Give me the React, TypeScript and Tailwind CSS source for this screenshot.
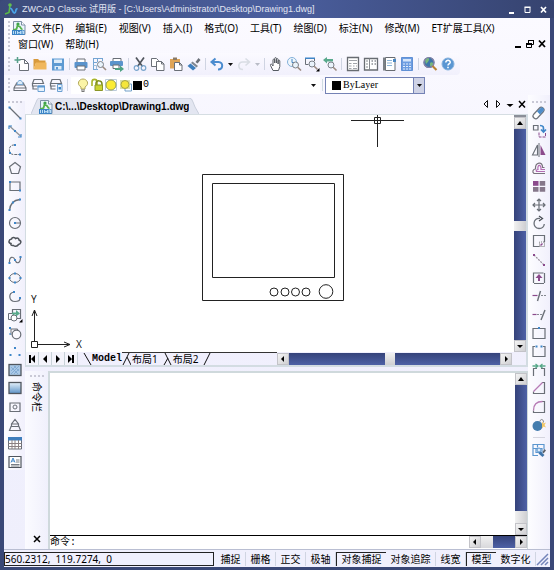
import React from 'react';

const G = '#6a6f77';
const B = '#3f86c8';
const P = '#8b4a8c';

type IconDef = { label: string; art: React.ReactNode };

const Icon: React.FC<{ children: React.ReactNode }> = ({ children }) => (
  <svg viewBox="0 0 16 16" className="block size-4 shrink-0" fill="none" aria-hidden="true">
    {children}
  </svg>
);

const ToolButton: React.FC<{ icon: IconDef }> = ({ icon }) => (
  <button type="button" title={icon.label} aria-label={icon.label} className="size-4 shrink-0 hover:bg-blue-100">
    <Icon>{icon.art}</Icon>
  </button>
);

const Dot: React.FC<{ x: number; y: number; c?: string }> = ({ x, y, c = B }) => (
  <rect x={x - 1} y={y - 1} width="2" height="2" fill={c} />
);

const Magnifier: React.FC<{ x: number; y: number }> = ({ x, y }) => (
  <>
    <circle cx={x} cy={y} r="3" fill="#eaf3fb" stroke="#7a7f87" />
    <path d={`M${x + 2.2} ${y + 2.2}l3.3 3.3`} stroke="#9a8a80" strokeWidth="1.6" />
  </>
);

const standardTools: IconDef[][] = [
  [
    { label: '新建', art: <><path d="M5.5 3.5h5l4 4v7h-9V8" fill="#fff" stroke={G} /><path d="M10.5 3.5v4h4" stroke={G} /><path d="M3.5 1v6M.5 4h6" stroke="#57a08a" strokeWidth="1.5" /></> },
    { label: '打开', art: <><path d="M1.5 13.5V3H6l1.500 1.500h6V7H4z" fill="#d89a3c" /><path d="M1.500 13.500L4 6.500h10.500v7z" fill="#f0b75c" /></> },
    { label: '保存', art: <><path d="M2 2.500h12v12H2z" fill="#5d9ad2" /><path d="M4 3.500h8V7H4zM4.500 10h7v3.500h-7z" fill="#dcecf9" /><path d="M6 11h2v2.500H6z" fill="#5d9ad2" /></> },
  ],
  [
    { label: '打印', art: <><path d="M4 3h8v4H4z" fill="#fff" stroke={G} /><rect x="1.500" y="6" width="13" height="6" rx="1" fill="#5a93cc" /><path d="M4 10h8v4H4z" fill="#fff" stroke={G} /></> },
    { label: '打印预览', art: <><path d="M2 2.500h10M2 13.500h5M2.500 2v12M6.500 2v4M2 6.500h4M11.500 2v3" stroke="#74a5d3" /><path d="M2.500 9.500h3M5.500 9.500v4" stroke="#9bbbd9" /><Magnifier x={9.500} y={8.500} /></> },
    { label: '发布', art: <><path d="M4 2.500h8v3H4z" fill="#fff" stroke={G} /><rect x="1" y="5" width="13" height="5" rx="1" fill="#5a93cc" /><path d="M4 9h6v3.500H4z" fill="#fff" stroke={G} /><path d="M6 12h5V9.500l4 3.500-4 3V14H6z" fill="#4ea183" /></> },
  ],
  [
    { label: '剪切', art: <><path d="M4 1.500l6.500 9M12 1.500l-6.500 9" stroke="#50555c" strokeWidth="1.700" /><circle cx="4.500" cy="12" r="2.300" stroke="#7aa5cc" strokeWidth="1.200" /><circle cx="11.500" cy="12" r="2.300" stroke="#7aa5cc" strokeWidth="1.200" /></> },
    { label: '复制', art: <><path d="M1.500 2.500h5l2 2v6h-7z" fill="#fff" stroke={G} /><path d="M6.500 5.500h5l2.500 2.500v6.500H6.500z" fill="#fff" stroke={G} /><path d="M11.500 5.500V8H14" stroke={G} /></> },
    { label: '粘贴', art: <><path d="M2 3h10v9.500H2z" fill="#e0a556" /><path d="M5 1.500h4V4H5z" fill="#8a7a65" /><path d="M6.500 6.500h5l2.500 2.500v5.500H6.500z" fill="#fff" stroke={G} /><path d="M11.500 6.500V9H14" stroke={G} /></> },
    { label: '特性匹配', art: <><path d="M9.500 6L12.500 2 14.500 4 11.500 7.500z" fill="#6b7078" /><path d="M6.500 5.500l5.500 4.500-1.500 1.500-5.500-4.500z" fill="#7f8791" /><path d="M4.500 7.500l5.500 4.500-3 2.500-5.500-4.500z" fill="#3f7fbd" /></> },
  ],
];

const undoIcon: IconDef = { label: '放弃', art: <path d="M6.500 2.500L2.500 6l4 3.500M3 6h6.500c5 0 5 7.500-.5 7.500" stroke="#4b8ccf" strokeWidth="2" /> };
const redoIcon: IconDef = { label: '重做', art: <path d="M9.500 2.500l4 3.500-4 3.500M13 6H6.500c-5 0-5 7.500.5 7.500" stroke="#d9dde4" strokeWidth="1.600" /> };

const viewTools: IconDef[][] = [
  [
    { label: '实时平移', art: <path d="M5 14.500L2.500 9.500c-.5-1.500 1-2 1.800-.5l.7 1V4c0-1.200 1.700-1.200 1.700 0v3-4.500c0-1.200 1.700-1.200 1.700 0V7 3.500c0-1.200 1.700-1.200 1.700 0V8 5c0-1.200 1.700-1.200 1.700 0v5.500l-1.300 4z" fill="#fff" stroke="#555a61" /> },
    { label: '实时缩放', art: <><circle cx="6" cy="6" r="4.500" fill="#eff6fc" stroke="#84b1da" /><path d="M6 3v3.500h2.500" stroke={B} /><Magnifier x={9.500} y={9} /></> },
    { label: '窗口缩放', art: <><path d="M1 1.500h10v1.500H1z" fill={B} /><path d="M1.500 3v5.500h3M10.500 3v2" stroke={G} /><Magnifier x={8} y={8} /><path d="M15.500 12v3.500H12z" fill="#000" /></> },
    { label: '缩放上一个', art: <><path d="M1 4l4-3v2h6v2.500H5V7.500z" fill="#59a98c" /><Magnifier x={9} y={9} /></> },
  ],
  [
    { label: '特性', art: <><path d="M2.500 1.500h11v13h-11z" fill="#fff" stroke="#686c72" strokeWidth="1.300" /><path d="M4 4.500h8M4 7.500h2.500M8 7.500h4M4 10h2.500M8 10h1.500M11 10h1M4 12.500h2.500M8 12.500h4" stroke="#a1a4a9" /></> },
    { label: '设计中心', art: <><path d="M1.500 2.500h13v11.500h-13z" fill="#fff" stroke="#686c72" strokeWidth="1.300" /><path d="M6.500 2.500V14M3 5h2M3 8h2M3 11h2" stroke="#85898f" /><path d="M8.500 5h1.500M11.500 5H13M8.500 8h1.500M11.500 8H13" stroke="#8a8e95" strokeWidth="1.500" /></> },
    { label: '工具选项板', art: <><path d="M4.500 1.500H14v13H4.500z" fill="#fff" stroke="#686c72" /><path d="M2 1.500h2.500v13H2z" fill="#7b8087" /><path d="M6 4.500h5M6 7h5M6 9.500h5" stroke="#8db4d8" /><path d="M12 3h3v3h-3z" fill="#4a86c1" /></> },
    { label: '计算器', art: <><path d="M2.500 1.500h11v13h-11z" fill="#6d9de1" stroke="#6090d5" /><path d="M4 3h8v2.500H4z" fill="#d7e6fa" /><path d="M4 8h8M4 10.500h8M4 13h8" stroke="#e4eefb" strokeWidth="1.200" strokeDasharray="2 1" /></> },
  ],
  [
    { label: '查找', art: <><circle cx="7" cy="6.500" r="5.500" fill="#3d75a8" /><path d="M3 4c2-3 5-2 4 0s-1 2-3 4zM8 7c2-2 4 0 3 2s-3 2-3 0z" fill="#76b67d" /><circle cx="7" cy="6.500" r="5" stroke="#8b82a5" strokeWidth="1.200" /><path d="M10.500 10l4 4" stroke="#b98234" strokeWidth="2.200" /></> },
    { label: '帮助', art: <><circle cx="8" cy="8" r="6" fill="#5a96d2" stroke="#85b1dd" /><path d="M5.800 6.500c0-3 4.600-2.800 4.400-.1C10 8 8 8 8 9.500" stroke="#fff" strokeWidth="1.500" /><path d="M7.200 10.800h1.600v1.500H7.200z" fill="#fff" /></> },
  ],
];

const layerTools: IconDef[] = [
  { label: '图层特性管理器', art: <><path d="M2 13.500h12v-2.500H2zM2 11l1.500-3h9L14 11M4 8l.5-2h7l.5 2" stroke={G} strokeWidth="1.100" /><path d="M5 7.500C5.500 2 10.500 2 11 7.500z" fill="#dcebf8" stroke="#7ba9d4" /></> },
  { label: '图层状态', art: <><path d="M4 2.500h8l1.500 4h-11zM2.500 6.500v2.500h5M3 9v3h4.500" stroke={G} strokeWidth="1.200" /><path d="M8 9h6.500v5.500H8z" fill="#e8f2fb" stroke="#6ca0d2" /><path d="M7.500 8.500h7.500v2H7.500z" fill="#5f98cf" /></> },
  { label: '上一个图层', art: <><path d="M4 2.500h8l1.500 4h-11zM2.500 6.500v2.500h5M3 9v3h4.500" stroke={G} strokeWidth="1.200" /><path d="M9.500 7.500h4.500v7H9.500z" fill="#e8f2fb" stroke="#6ca0d2" /><path d="M10.500 10h2.500v2.500h-2.500z" fill={B} /></> },
];

const drawTools: IconDef[] = [
  { label: '直线', art: <><path d="M2.500 2.500l11 11" stroke={G} strokeWidth="1.300" /><Dot x={2.500} y={2.500} /><Dot x={13.500} y={13.500} /></> },
  { label: '构造线', art: <><path d="M2.500 3l11 10" stroke="#8a9097" strokeWidth="1.200" /><path d="M5 3H2v3M11 14h3v-3" stroke={B} strokeWidth="1.200" /><Dot x={8} y={8} /></> },
  { label: '多段线', art: <><path d="M8 3H6.500C1 3 1 12.500 6.500 12.500h7" stroke={G} strokeDasharray="3 1" /><Dot x={8} y={3} /><Dot x={3} y={11} /><Dot x={13} y={12.500} /></> },
  { label: '正多边形', art: <path d="M8 2.500l5.500 4.200-2 6.800h-7l-2-6.800z" stroke={G} strokeWidth="1.200" /> },
  { label: '矩形', art: <><path d="M3 4h10v8.500H3z" stroke={G} strokeWidth="1.200" /><Dot x={3} y={4} /><Dot x={13} y={12.500} /></> },
  { label: '圆弧', art: <><path d="M2.500 13.500C3 7 7 3 13 2.500" stroke={G} strokeWidth="1.300" /><Dot x={2.500} y={13} /><Dot x={6} y={5.500} /><Dot x={13} y={2.500} /></> },
  { label: '圆', art: <><circle cx="8" cy="8" r="5.500" stroke={G} strokeWidth="1.200" /><path d="M8 8h5.500" stroke={G} /><Dot x={8} y={8} /></> },
  { label: '修订云线', art: <path d="M4.500 5C5 3 8 3 8.500 4.500 11 3 12 5 12 6c3 1 2 4-.5 4.500C10 13 7.500 12.500 6.500 11.500 4 12 3.500 10.500 4 9.500 1 9 1.500 5.500 4.500 5z" stroke="#4f545b" strokeWidth="1.500" /> },
  { label: '样条曲线', art: <><path d="M2.500 11C2 4 6.500 4 8 8s5.500 4 5.500-3" stroke={G} strokeWidth="1.200" /><Dot x={2.500} y={11} /><Dot x={8} y={8} /><Dot x={13.500} y={5} /></> },
  { label: '椭圆', art: <><ellipse cx="8" cy="8" rx="5.500" ry="4.500" stroke={G} /><Dot x={8} y={3.500} /><Dot x={2.500} y={8} /><Dot x={13.500} y={8} /><Dot x={8} y={12.500} /></> },
  { label: '椭圆弧', art: <><path d="M7 3C1 4 1.500 12 8 12.500c3 0 5-1 5-3" stroke={G} strokeWidth="1.200" /><Dot x={13} y={9} /><Dot x={7} y={3} /></> },
  { label: '插入块', art: <><path d="M5.500 7V2.500h8v9H9" stroke={G} strokeWidth="1.200" /><path d="M1.500 6.500h5v6h-5z" stroke={G} /><circle cx="7" cy="11" r="3" fill="#fff" stroke={G} /><path d="M5 5.500h4V3l4 3.500-4 3V7.500H5z" fill="#58a98a" /><path d="M15.500 12v3.500H12z" fill="#000" /></> },
  { label: '创建块', art: <><path d="M4 4h6.500v2M4 4v6" stroke={G} /><circle cx="9.500" cy="9.500" r="4.300" fill="#fbfaff" stroke={G} strokeWidth="1.200" /><Dot x={3} y={3} /><path d="M2 9h2" stroke={B} /></> },
  { label: '点', art: <><Dot x={8} y={4} /><Dot x={3.500} y={11} /><Dot x={12.500} y={11} /></> },
  { label: '图案填充', art: <><rect x="2" y="2.500" width="12" height="11" fill="#aac8e6" stroke="#50565e" strokeWidth="1.300" /><path d="M4 12l8-8M4 9l5-5M7 12l5-5M4 5l7 7M7 4l5 5" stroke="#7ba6d0" strokeWidth=".8" /></> },
  { label: '渐变色', art: <><defs><linearGradient id="fillGradient" x2="0" y2="1"><stop stopColor="#e5f1fb" /><stop offset="1" stopColor="#5c92c6" /></linearGradient></defs><rect x="2" y="2.500" width="12" height="11" fill="url(#fillGradient)" stroke="#50565e" strokeWidth="1.300" /></> },
  { label: '面域', art: <><path d="M3 4h10v8.500H3z" stroke={G} strokeWidth="1.200" /><circle cx="8" cy="8" r="2" stroke={G} /></> },
  { label: '擦除', art: <><path d="M4.500 9.500V7L8 2.500 11.500 7v2.500M4.500 7h7M4 9.500h8l1.500 4h-11z" stroke={G} strokeWidth="1.200" /></> },
  { label: '表格', art: <><path d="M1.500 2.500h13v11.500h-13z" fill="#fff" stroke={G} /><path d="M1 2h14v3.500H1z" fill="#3f7dbb" /><path d="M1.500 8.500h13M1.500 11.500h13M5 5v9M8 5v9M11.500 5v9" stroke="#8b8183" /></> },
  { label: '多行文字', art: <><path d="M2 2.500h12v11H2z" fill="#fff" stroke="#50565e" strokeWidth="1.200" /><path d="M4 8.500L6 4l2 4.500M5 7h2" stroke={B} /><path d="M9 6h3.500M9 8h3.500M4 10.500h8.500M4 12h8.500" stroke={G} strokeWidth=".9" /></> },
];

const modifyTools: IconDef[] = [
  { label: '删除', art: <><path d="M2.500 9.500l6-6.500c2-2 6 1 4 3.500l-6 6.500c-2 2-6-1-4-3.500z" fill="#fff" stroke="#6d737b" strokeWidth="1.200" /><path d="M6 6.500L9.500 3c2-1.500 4.500 1 3 3L9 9.500z" fill="#4f8dca" /></> },
  { label: '复制对象', art: <><path d="M2.500 2.500H7v4.500H2.500z" stroke={G} strokeWidth="1.200" /><path d="M9 2.500c4 0 3.500 2 3.500 6M10 6.500L12.500 9 15 6.500" stroke={B} strokeWidth="1.700" /><path d="M8 9.500v4.500h6.500v-4" stroke={P} strokeDasharray="3 1" /></> },
  { label: '镜像', art: <><path d="M6.500 3v10h-5z" stroke={G} strokeWidth="1.100" /><path d="M9.500 3v10h5z" fill={P} /><path d="M8 1v14" stroke={G} /></> },
  { label: '偏移', art: <><path d="M14 13.500H3c-2.500-2-.5-4.500 1.500-4.500C4 2 12 1 11.500 7.500h2" stroke="#79717d" strokeWidth="1.200" /><path d="M14 11.500H5.500c-1-1 .5-2 1.500-2C6 4 10.500 4 10 9.500h4" stroke="#b36cb3" strokeWidth="1.200" /></> },
  { label: '阵列', art: <><path d="M2 3h5.500v4.800H2z" fill={P} /><path d="M8.700 3h5.500v4.800H8.700zM2 9h5.500v4.800H2zM8.700 9h5.500v4.800H8.700z" fill="#85778a" /></> },
  { label: '移动', art: <path d="M8 2v12M2 8h12M6 4l2-2 2 2M6 12l2 2 2-2M4 6L2 8l2 2M12 6l2 2-2 2" stroke={G} strokeWidth="1.200" /> },
  { label: '旋转', art: <><path d="M9 3.500C1.500 2.500 1 13 8 13.500c3 0 5-2 5.300-4.500" stroke={G} strokeWidth="1.300" /><path d="M8 1l3.500 2.500L8 6" stroke="#4a4e55" strokeWidth="1.300" /></> },
  { label: '缩放', art: <><path d="M13.500 9V2.500h-11v11H8" stroke={G} strokeWidth="1.200" /><path d="M8.500 13.500V9h5v4.500z" stroke="#777" strokeDasharray="1 1" /><path d="M9.500 12.500l2-2" stroke={P} strokeWidth="1.500" /></> },
  { label: '拉伸', art: <><path d="M3 3l10 10" stroke="#99929d" strokeWidth="1.200" strokeDasharray="2 1" /><Dot x={3} y={3} c={P} /><Dot x={13} y={13} c={P} /></> },
  { label: '拉长', art: <><path d="M2.500 3h11v10.500h-11z" stroke={G} strokeWidth="1.200" strokeDasharray="10 1" /><path d="M8 4l3.500 4H9v3H7V8H4.500z" fill={P} /></> },
  { label: '修剪', art: <><path d="M9.500 3l-3 10" stroke={G} strokeWidth="1.400" /><path d="M1.500 7.500h5" stroke={P} strokeWidth="1.200" /><path d="M10 7.500h5" stroke="#858991" strokeDasharray="2 1" /></> },
  { label: '延伸', art: <><path d="M14 3l-4 10" stroke={G} strokeWidth="1.400" /><path d="M1.500 7.500h4" stroke={P} strokeWidth="1.200" /><path d="M6 7.500h5" stroke="#858991" strokeDasharray="2 1" /></> },
  { label: '打断于点', art: <><path d="M2 3.500h12v10H2z" stroke={G} strokeWidth="1.200" /><Dot x={8} y={3} /></> },
  { label: '打断', art: <><path d="M4 3.500H2v10h12v-10h-2" stroke={G} strokeWidth="1.200" /><Dot x={5.500} y={3.500} /><Dot x={10.500} y={3.500} /></> },
  { label: '合并', art: <><path d="M2.500 14V6.500H6M13.500 14V6.500H10" stroke={G} strokeWidth="1.200" /><path d="M1.500 4h5M9.500 4h5M4.500 2l2.500 2-2.500 2M11.500 2L9 4l2.500 2" stroke="#58a98a" strokeWidth="1.300" /></> },
  { label: '倒角', art: <><path d="M11 2.500h2.500v11h-11v-2" stroke={G} strokeWidth="1.200" /><path d="M2.500 11.500l9-9" stroke="#b77ab5" strokeWidth="1.300" /></> },
  { label: '圆角', art: <><path d="M11 2.500h2.500v11h-11v-2" stroke={G} strokeWidth="1.200" /><path d="M2.500 11.500c0-6 3-9 9-9" stroke="#b77ab5" strokeWidth="1.300" /></> },
  { label: '分解', art: <><circle cx="6.500" cy="9" r="5" fill="#437cae" /><path d="M9 4.500c0-3 4-2.500 3.500 1" stroke="#83878d" /><path d="M11 4.500l1.500 2L15 5.500 13.500 8l1.500 2.500-2.500-1-1.500 2z" fill="#f1c765" /></> },
];

const matchIcon: IconDef = {
  label: '块编辑',
  art: <><path d="M2 2.500h11v5M2 2v11.500h5M2 6.500h3M6.500 2.500v3M5 6.500h6v4H5z" stroke="#5b96cf" strokeWidth="1.200" /><circle cx="8" cy="8" r="2" fill="#dcebfa" stroke="#5b96cf" /><path d="M11.500 10l2-3 1.500 1.500-2.500 3z" fill="#5c6067" /><path d="M9.500 9.500l4 3.500-2 2-4-3.500z" fill="#3f73a8" /></>,
};

const menus = ['文件(F)', '编辑(E)', '视图(V)', '插入(I)', '格式(O)', '工具(T)', '绘图(D)', '标注(N)', '修改(M)', 'ET扩展工具(X)', '窗口(W)', '帮助(H)'];

const modes = [
  { name: '捕捉', on: false },
  { name: '栅格', on: false },
  { name: '正交', on: false },
  { name: '极轴', on: false },
  { name: '对象捕捉', on: true },
  { name: '对象追踪', on: false },
  { name: '线宽', on: false },
  { name: '模型', on: true },
  { name: '数字化', on: false },
];

const DwgIcon = () => (
  <svg viewBox="0 0 14 14" className="block size-[14px] shrink-0" aria-hidden="true">
    <path d="M1.500.5h8l3.500 3.500v9.500H1.500z" fill="#eaf4fb" stroke="#7c8fa5" />
    <path d="M9.500.5V4H13" fill="#fff" stroke="#7c8fa5" />
    <path d="M1 9l3.500-1 1.500-5M6.500 5.500c2.500-1 1.500 3 4 2.500" fill="none" stroke="#54b24b" strokeWidth="1.800" />
    <circle cx="6" cy="3" r="1.600" fill="#3fa34a" />
    <path d="M0 9h12.500v5H0z" fill="#3b83c5" />
    <path d="M1.500 10v3M3.500 10v3M5.500 10v3l1.500-2 1.500 2v-3M10 13v-3h1.500v3" fill="none" stroke="#b9dcf5" />
  </svg>
);

const arrowPaths = {
  up: 'M6 4L3 8h6z',
  down: 'M3 5h6L6 8z',
  left: 'M4 6l3-3v6z',
  right: 'M8 6L5 3v6z',
  first: 'M3 2h2v8H3zM9 2v8L5 6z',
  last: 'M7 2h2v8H7zM3 2v8l4-4z',
  prev: 'M8 2v8L4 6z',
  next: 'M4 2v8l4-4z',
};

const Arrow: React.FC<{ dir: keyof typeof arrowPaths }> = ({ dir }) => (
  <svg viewBox="0 0 12 12" className="block size-3 shrink-0" aria-hidden="true">
    <path d={arrowPaths[dir]} fill="#000" />
  </svg>
);

const ScrollButton: React.FC<{ dir: 'up' | 'down' | 'left' | 'right'; label: string }> = ({ dir, label }) => (
  <button type="button" aria-label={label} className="flex size-3 shrink-0 items-center justify-center border border-[#c3c3c8] bg-linear-to-br from-[#f4f4f4] to-[#cfcfd2]">
    <Arrow dir={dir} />
  </button>
);

const Grip = () => (
  <div className="grid shrink-0 gap-[2px]">
    {[0, 1, 2, 3].map((n) => (
      <span key={n} className="block size-[2px] bg-[#c9c9d6]" />
    ))}
  </div>
);

const GripRow = () => (
  <div className="flex shrink-0 justify-center gap-[2px]">
    {[0, 1, 2, 3].map((n) => (
      <span key={n} className="block size-[2px] bg-[#c9c9d6]" />
    ))}
  </div>
);

const Divider = () => <span className="mx-px h-3 w-px shrink-0 bg-[#cfd4e2]" />;

const DropArrow: React.FC<{ label: string; muted?: boolean }> = ({ label, muted }) => (
  <button type="button" aria-label={label} className="flex h-4 w-[7px] shrink-0 items-center justify-center">
    <svg viewBox="0 0 5 3" className="w-[5px]" aria-hidden="true">
      <path d="M0 0h5L2.500 3z" fill={muted ? '#b9bcc6' : '#111'} />
    </svg>
  </button>
);

const TitleBar = () => (
  <header className="flex h-[18px] shrink-0 items-center justify-between rounded-t bg-linear-to-r from-[#3c4b7a] via-[#4b5f9f] to-[#36436f] px-1">
    <div className="flex min-w-0 items-center gap-1">
      <svg viewBox="0 0 14 14" className="size-[14px] shrink-0" fill="none" aria-hidden="true">
        <path d="M1 12l4-1.500L6 3" stroke="#59b947" strokeWidth="1.600" />
        <circle cx="6" cy="3" r="1.800" fill="#63c04e" />
        <path d="M6 6.500c2.500-1 2.500 5 4.500 4.500S11 6.500 13.500 7" stroke="#4aa3e8" strokeWidth="1.800" />
      </svg>
      <h1 className="truncate font-['Liberation_Sans','Noto_Sans_CJK_SC',sans-serif] text-[9px] leading-4 text-[#e1e5f2]">
        ZWCAD Classic 试用版 - [C:\Users\Administrator\Desktop\Drawing1.dwg]
      </h1>
    </div>
    <div className="flex shrink-0 gap-[5px] pr-px">
      <button type="button" aria-label="最小化" className="size-[11px]">
        <svg viewBox="0 0 11 11" aria-hidden="true"><path d="M3 8h5v2H3z" fill="#fff" /></svg>
      </button>
      <button type="button" aria-label="最大化" className="size-[11px]">
        <svg viewBox="0 0 11 11" aria-hidden="true"><path d="M3 3.500h5v5H3z" fill="none" stroke="#fff" /><path d="M2.500 2.500h6v1.500h-6z" fill="#fff" /></svg>
      </button>
      <button type="button" aria-label="关闭" className="size-[11px]">
        <svg viewBox="0 0 11 11" aria-hidden="true"><path d="M3 3l5 5.500M8 3L3 8.500" stroke="#fff" strokeWidth="1.700" /></svg>
      </button>
    </div>
  </header>
);

const MenuBar = () => (
  <div className="flex shrink-0 pt-[2px] pl-1">
    <div className="grid content-around">
      <Grip />
      <Grip />
    </div>
    <nav className="flex flex-1 flex-wrap items-center pl-[2px]">
      <DwgIcon />
      {menus.map((name) => (
        <button key={name} type="button" className="h-4 px-[6px] leading-4 whitespace-nowrap hover:bg-blue-100">
          {name}
        </button>
      ))}
    </nav>
    <div className="flex shrink-0 items-center self-end pr-[2px] pb-[2px]">
      <button type="button" aria-label="最小化图形" className="size-3">
        <svg viewBox="0 0 12 12" aria-hidden="true"><path d="M3 8h6v2H3z" fill="#000" /></svg>
      </button>
      <button type="button" aria-label="还原图形" className="size-3">
        <svg viewBox="0 0 12 12" fill="none" aria-hidden="true"><path d="M4.500 5V2.500h5v4H8" stroke="#000" /><path d="M4 2h6v1H4zM2 5h6v2H2z" fill="#000" /><path d="M2.500 6v3.500h5V6" stroke="#000" /></svg>
      </button>
      <button type="button" aria-label="关闭图形" className="size-3">
        <svg viewBox="0 0 12 12" aria-hidden="true"><path d="M3 2.500L9 9M9 2.500L3 9" stroke="#000" strokeWidth="1.800" /></svg>
      </button>
    </div>
  </div>
);

const StandardToolbar = () => (
  <div className="mt-px flex h-[22px] w-max shrink-0 items-center gap-[2px] rounded-r bg-linear-to-b from-[#fbfaff] to-[#f1f0fc] pr-1 pl-1">
    <Grip />
    <span className="w-0" />
    {standardTools.map((group, i) => (
      <React.Fragment key={i}>
        {group.map((icon) => <ToolButton key={icon.label} icon={icon} />)}
        <Divider />
      </React.Fragment>
    ))}
    <ToolButton icon={undoIcon} />
    <DropArrow label="放弃列表" />
    <ToolButton icon={redoIcon} />
    <DropArrow label="重做列表" muted />
    {viewTools.map((group, i) => (
      <React.Fragment key={i}>
        <Divider />
        {group.map((icon) => <ToolButton key={icon.label} icon={icon} />)}
      </React.Fragment>
    ))}
  </div>
);

const LayerToolbar = () => (
  <div className="flex h-5 shrink-0 items-center gap-[2px] pl-1">
    <Grip />
    {layerTools.map((icon) => <ToolButton key={icon.label} icon={icon} />)}
    <Divider />
    <label className="flex h-[17px] w-[249px] items-center bg-white pl-1">
      <svg viewBox="0 0 58 16" className="h-4 w-[58px] shrink-0" fill="none" aria-hidden="true">
        <path d="M6 12V10C1 7 4 2 8 2s7 5 2 8v2z" fill="#fbf4a6" stroke="#b3a95d" />
        <path d="M6 13h4M6.500 14.500h3" stroke="#777" />
        <path d="M17 9V5c0-3.500 5-3.500 5 0v4" stroke="#a9b52c" strokeWidth="1.600" />
        <path d="M21 8V6c0-3 6-3 6 1v3" stroke="#7d8d1c" strokeWidth="1.500" />
        <path d="M20 8h7.500v5.500H20z" fill="#ccd532" stroke="#8b9626" />
        <path d="M30.500 2.500h11v11h-11z" stroke="#bccbda" />
        <circle cx="36" cy="8" r="5" fill="#fcec35" stroke="#98a052" />
        <path d="M50 7h6.500v7H50z" fill="#fff" stroke="#72a0c9" />
        <path d="M45 3h10v9H45z" fill="#dbe0ae" />
        <circle cx="50" cy="7.500" r="4" fill="#f5e63a" stroke="#a9a647" />
      </svg>
      <span className="size-[9px] shrink-0 bg-black" />
      <select aria-label="图层" className="min-w-0 flex-1 appearance-none bg-transparent px-px font-['Liberation_Mono','Noto_Sans_CJK_SC',monospace] leading-4">
        <option>0</option>
      </select>
      <svg viewBox="0 0 5 3" className="mr-1 w-[5px] shrink-0" aria-hidden="true"><path d="M0 0h5L2.500 3z" fill="#111" /></svg>
    </label>
    <span className="h-3 w-px shrink-0 bg-[#cfdce2]" />
    <label className="flex h-[17px] w-[100px] items-center border border-[#7482b5] bg-white pl-[6px]">
      <span className="size-[9px] shrink-0 bg-black" />
      <select aria-label="颜色" className="min-w-0 flex-1 appearance-none bg-transparent px-[2px] font-['Liberation_Serif','Noto_Sans_CJK_SC',serif] leading-[14px]">
        <option>ByLayer</option>
      </select>
      <span className="flex h-full w-[11px] shrink-0 items-center justify-center border-l border-[#7482b5] bg-[#cfd3e6]">
        <svg viewBox="0 0 5 3" className="w-[5px]" aria-hidden="true"><path d="M0 0h5L2.500 3z" fill="#111" /></svg>
      </span>
    </label>
  </div>
);

const FileTabs = () => (
  <div className="flex h-5 shrink-0 items-end justify-between border-b border-[#d5dde2] pl-[6px]">
    <div className="flex h-4">
      <svg viewBox="0 0 8 16" className="h-4 w-2" aria-hidden="true"><path d="M0 16L6 2q1-2 2-2v16z" fill="#e3e6f1" /><path d="M0 16L6 2q1-2 2-2" fill="none" stroke="#c9cfdc" /></svg>
      <button type="button" className="flex items-center gap-[2px] border-t border-[#d5d9e5] bg-[#e3e6f1] font-['Liberation_Sans',sans-serif] font-bold">
        <DwgIcon />
        <span>C:\...\Desktop\Drawing1.dwg</span>
      </button>
      <svg viewBox="0 0 10 16" className="h-4 w-[10px]" aria-hidden="true"><path d="M0 0q3 0 4 4t6 12H0z" fill="#e3e6f1" /><path d="M0 0q3 0 4 4t6 12" fill="none" stroke="#c9cfdc" /></svg>
    </div>
    <div className="flex pb-1">
      <button type="button" aria-label="上一个图形" className="size-3"><svg viewBox="0 0 12 12" aria-hidden="true"><path d="M7.500 2.500v7L4 6z" fill="none" stroke="#111" /></svg></button>
      <button type="button" aria-label="下一个图形" className="size-3"><svg viewBox="0 0 12 12" aria-hidden="true"><path d="M4.500 2.500v7L8 6z" fill="none" stroke="#111" /></svg></button>
      <button type="button" aria-label="图形列表" className="size-3"><svg viewBox="0 0 12 12" aria-hidden="true"><path d="M2.500 6h7L6 9z" fill="#000" /></svg></button>
      <button type="button" aria-label="关闭标签" className="size-3"><svg viewBox="0 0 12 12" aria-hidden="true"><path d="M3 3l6 6.500M9 3L3 9.500" stroke="#000" strokeWidth="1.500" /></svg></button>
    </div>
  </div>
);

const Canvas = () => (
  <div className="relative min-w-0 flex-1 overflow-hidden bg-white">
    <svg className="absolute inset-0 size-full" fill="none" stroke="#222" aria-label="Drawing1" role="img">
      <path d="M325 5.500h53M351.500 0v32" />
      <path d="M348.500 2.500h6v6h-6z" />
      <path d="M176.500 59.500h141v126h-141z" />
      <path d="M186.500 68.500h122v94h-122z" />
      <circle cx="248" cy="177" r="4" />
      <circle cx="259" cy="177" r="4" />
      <circle cx="269.500" cy="177" r="4" />
      <circle cx="280" cy="177" r="4" />
      <circle cx="300" cy="176.500" r="6.800" />
    </svg>
    <svg viewBox="0 0 60 60" className="absolute bottom-0 left-0 size-[60px]" fill="none" stroke="#222" aria-hidden="true">
      <path d="M8.500 50V18M6 24l2.500-6 2.500 6M12 52.500h32M38 50l6 2.500-6 2.500M5.500 49.500h6v6h-6z" />
      <text x="5" y="11" fill="#222" stroke="none" className="text-[10px]">Y</text>
      <text x="50" y="56" fill="#222" stroke="none" className="text-[10px]">X</text>
    </svg>
  </div>
);

const TabEdge: React.FC<{ d: string }> = ({ d }) => (
  <svg viewBox="0 0 9 12" className="h-3 w-[9px] shrink-0" fill="none" stroke="#111" aria-hidden="true">
    <path d={d} />
  </svg>
);

const LayoutTabs = () => (
  <div className="flex h-[13px] shrink-0 pr-[14px]">
    <div className="flex">
      {(['first', 'prev', 'next', 'last'] as const).map((dir) => (
        <button key={dir} type="button" aria-label={dir} className="flex h-[13px] w-[13px] items-center justify-center border-r border-[#c8d2d8] bg-[#f4f4fb]">
          <Arrow dir={dir} />
        </button>
      ))}
    </div>
    <div className="flex flex-1 items-center leading-3">
      <span className="w-[5px]" />
      <TabEdge d="M1 0l7 12" />
      <button type="button" className="font-['Liberation_Mono',monospace] font-bold">Model</button>
      <div className="flex h-full flex-1 items-center border-t border-[#333]">
        <TabEdge d="M1 12L7 0M5 4l4 8" />
        <button type="button" className="px-px">布局1</button>
        <span className="w-1" />
        <TabEdge d="M1 12l4-7M2 0l6 12" />
        <button type="button" className="px-px">布局2</button>
        <span className="w-1" />
        <TabEdge d="M1 12L7 0" />
      </div>
    </div>
    <div className="flex h-3 w-[235px] self-end bg-linear-to-b from-[#35437a] to-[#4e61a6]">
      <ScrollButton dir="left" label="向左滚动" />
      <span className="flex-[96]" />
      <span className="w-[10px] bg-linear-to-b from-[#f1f1f1] to-[#cfcfd2]" />
      <span className="flex-[105]" />
      <ScrollButton dir="right" label="向右滚动" />
    </div>
  </div>
);

const DrawingWindow = () => (
  <section className="flex min-h-0 flex-1 flex-col border-r-2 border-b-2 border-l border-[#d3dce2]">
    <div className="flex min-h-0 flex-1">
      <Canvas />
      <div className="flex w-3 shrink-0 flex-col border-t-2 border-[#8b8f98] bg-linear-to-r from-[#35437a] to-[#4e61a6]">
        <ScrollButton dir="up" label="向上滚动" />
        <span className="flex-[90]" />
        <span className="h-[10px] bg-linear-to-r from-[#f1f1f1] to-[#cfcfd2]" />
        <span className="flex-[107]" />
        <ScrollButton dir="down" label="向下滚动" />
      </div>
    </div>
    <LayoutTabs />
  </section>
);

const CommandPanel = () => (
  <section className="mt-1 flex h-[178px] shrink-0">
    <div className="flex w-[23px] shrink-0 flex-col items-center bg-linear-to-r from-[#fbfbff] to-[#f0f0fc] pt-1 pb-1">
      <GripRow />
      <h2 className="mt-[5px] flex-1 font-['Noto_Sans_CJK_SC',sans-serif] leading-3 [text-orientation:sideways] [writing-mode:vertical-rl]">命令栏</h2>
      <button type="button" aria-label="关闭命令栏" className="size-3">
        <svg viewBox="0 0 12 12" aria-hidden="true"><path d="M3 3l6 6M9 3L3 9" stroke="#000" strokeWidth="1.500" /></svg>
      </button>
    </div>
    <div className="flex min-w-0 flex-1 flex-col border-t-2 border-r border-l-2 border-[#cfd9dc] bg-white">
      <div className="flex flex-1">
        <div className="flex-1" role="log" />
        <div className="flex w-3 flex-col bg-linear-to-r from-[#35437a] to-[#4e61a6]">
          <ScrollButton dir="up" label="命令历史向上" />
          <span className="flex-1" />
          <span className="h-3 bg-linear-to-r from-[#f1f1f1] to-[#cfcfd2]" />
          <ScrollButton dir="down" label="命令历史向下" />
        </div>
      </div>
      <div className="flex h-[14px] border-t border-black">
        <label htmlFor="command" className="font-['Liberation_Mono','Noto_Sans_CJK_SC',monospace] leading-[13px]">命令:</label>
        <input id="command" type="text" className="min-w-0 flex-1 bg-transparent px-1 outline-none" />
        <div className="flex h-3 w-[58px] bg-linear-to-b from-[#35437a] to-[#4e61a6]">
          <ScrollButton dir="left" label="命令向左" />
          <span className="w-3 bg-linear-to-b from-[#f1f1f1] to-[#d8d8db]" />
          <span className="flex-1" />
          <ScrollButton dir="right" label="命令向右" />
        </div>
      </div>
    </div>
  </section>
);

const StatusBar = () => (
  <footer className="flex h-[18px] shrink-0 items-center border-t border-[#b9bed2] bg-[#f0f0fd]">
    <output className="h-[14px] w-[210px] border border-[#222] leading-3 whitespace-pre">560.2312,  119.7274,  0</output>
    <div className="flex h-[14px] flex-1 items-center pl-[2px]">
      {modes.map((mode) => (
        <button
          key={mode.name}
          type="button"
          aria-pressed={mode.on}
          className={`h-[14px] grow px-1 leading-3 whitespace-nowrap ${
            mode.on ? 'border-t border-l border-[#222]' : 'border-r border-[#d0d5e2]'
          }`}
        >
          {mode.name}
        </button>
      ))}
      <svg viewBox="0 0 14 14" className="size-[14px] shrink-0" stroke="#7384b9" strokeWidth="1.500" aria-hidden="true">
        <path d="M1 13L12 2M5 13l7-7M9 13l3-3" />
      </svg>
    </div>
  </footer>
);

const App: React.FC = () => {
  return (
    <div className="flex h-screen min-h-[480px] flex-col bg-[#3a4877] pb-[3px] font-['Noto_Sans','Noto_Sans_CJK_SC',sans-serif] text-[10px] text-black">
      <TitleBar />
      <div className="mx-1 flex min-h-0 flex-1 flex-col bg-linear-to-b from-[#fbfaff] via-[#f1f0fd] to-[#efeffc]">
        <MenuBar />
        <StandardToolbar />
        <LayerToolbar />
        <main className="flex min-h-0 flex-1">
          <aside className="flex w-[21px] shrink-0 flex-col pt-[6px]">
            <div className="flex flex-col items-center bg-linear-to-r from-[#fdfdff] to-[#f1f0fc]">
              <GripRow />
              <div className="mt-[2px] flex h-[365px] flex-col justify-between">
                {drawTools.map((icon) => <ToolButton key={icon.label} icon={icon} />)}
              </div>
            </div>
          </aside>
          <div className="flex min-w-0 flex-1 flex-col">
            <FileTabs />
            <DrawingWindow />
            <CommandPanel />
          </div>
          <aside className="flex w-[22px] shrink-0 flex-col items-center bg-linear-to-r from-[#fdfdff] to-[#f1f0fc] pt-[6px]">
            <GripRow />
            <div className="mt-[2px] flex h-[328px] flex-col justify-between">
              {modifyTools.map((icon) => <ToolButton key={icon.label} icon={icon} />)}
            </div>
            <span className="my-1 h-px w-3 bg-[#d5d5df]" />
            <ToolButton icon={matchIcon} />
          </aside>
        </main>
        <StatusBar />
      </div>
    </div>
  );
};

export default App;
